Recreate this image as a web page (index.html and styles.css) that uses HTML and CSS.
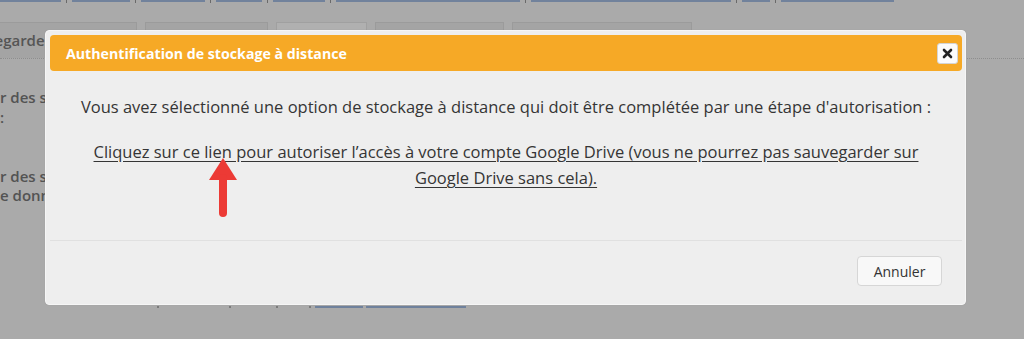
FILE: index.html
```html
<!DOCTYPE html>
<html lang="fr">
<head>
<meta charset="utf-8">
<title>Authentification de stockage à distance</title>
<link rel="stylesheet" href="styles.css">
</head>
<body>
<div class="page">
  <div class="toplinks">
    <span class="ln l1"></span><span class="sep"></span>
    <span class="ln l2"></span><span class="sep"></span>
    <span class="ln l3"></span><span class="sep"></span>
    <span class="ln l4"></span><span class="sep"></span>
    <span class="ln l5"></span><span class="sep"></span>
    <span class="ln l6"></span><span class="sep"></span>
    <span class="ln l7"></span><span class="sep"></span>
    <span class="ln l8"></span><span class="sep"></span>
    <span class="ln l9"></span>
  </div>
  <div class="tabs">
    <div class="tab t1"><span class="tab-label">Sauvegarder / Restaurer</span></div>
    <div class="tab t2"></div>
    <div class="tab t3 active"></div>
    <div class="tab t4"></div>
    <div class="tab t5"></div>
  </div>
  <div class="labels">
    <div class="label-group">
      <div class="label-line">r des sauvegardes distantes</div>
      <div class="label-line">:</div>
    </div>
    <div class="label-group">
      <div class="label-line">r des sauvegardes</div>
      <div class="label-line">e données</div>
    </div>
  </div>
  <div class="bottomrow">
    <span class="dot d1"></span>
    <span class="dot d2"></span>
    <span class="dot d3"></span>
    <span class="dot d4"></span>
    <span class="bl b1"></span>
    <span class="bl b2"></span>
  </div>
</div>

<div class="dialog" role="dialog" aria-labelledby="dlg-title">
  <div class="dialog-header">
    <span id="dlg-title" class="dialog-title">Authentification de stockage à distance</span>
    <button class="close-btn" type="button" aria-label="Fermer">
      <svg width="11" height="11" viewBox="0 0 11 11" aria-hidden="true"><path d="M2 2 L9 9 M9 2 L2 9" stroke="#222" stroke-width="2.6" stroke-linecap="round"/></svg>
    </button>
  </div>
  <div class="dialog-body">
    <p class="intro">Vous avez sélectionné une option de stockage à distance qui doit être complétée par une étape d'autorisation :</p>
    <p class="auth"><a href="#">Cliquez sur ce lien pour autoriser l’accès à votre compte Google Drive (vous ne pourrez pas sauvegarder sur Google Drive sans cela).</a></p>
    <svg class="arrow" width="30" height="60" viewBox="0 0 30 60" aria-hidden="true">
      <path d="M15 1 L1 23 L29 23 Z" fill="#ec3a35"/>
      <path d="M15 21 L15 56" stroke="#ec3a35" stroke-width="8" stroke-linecap="round"/>
    </svg>
  </div>
  <div class="dialog-footer">
    <button class="btn" type="button">Annuler</button>
  </div>
</div>
</body>
</html>
```
FILE: styles.css
```css
html, body {
  margin: 0;
  padding: 0;
}
body {
  background: #aaaaaa;
  width: 1024px;
  height: 339px;
  overflow: hidden;
  font-family: "Open Sans", "DejaVu Sans", sans-serif;
}
.page {
  display: flex;
  flex-direction: column;
}
.toplinks {
  display: flex;
  align-items: flex-start;
  gap: 5px;
  height: 2px;
}
.ln {
  display: block;
  height: 2px;
  background: #71829c;
}
.sep {
  display: block;
  width: 1px;
  height: 3px;
  background: #6a6a6a;
}
.l1 { width: 61px; }
.l2 { width: 58px; }
.l3 { width: 64px; }
.l4 { width: 46px; }
.l5 { width: 52px; }
.l6 { width: 184px; }
.l7 { width: 200px; }
.l8 { width: 28px; }
.l9 { width: 113px; }

.tabs {
  display: flex;
  gap: 8px;
  margin-top: 20px;
  height: 36px;
  border-bottom: 1px dotted #8e8e8e;
}
.tab {
  box-sizing: border-box;
  height: 36px;
  background: #a4a4a4;
  border: 1px solid #9b9b9b;
  border-bottom: none;
  overflow: hidden;
  white-space: nowrap;
}
.t1 { width: 137px; border-left: none; }
.t2 { width: 123px; }
.t3 { width: 91px; background: #b0b0b0; border-color: #a0a0a0; }
.t4 { width: 129px; }
.t5 { width: 180px; }
.tab-label {
  display: block;
  margin-left: -40px;
  padding-top: 7px;
  font-size: 15px;
  font-weight: 600;
  color: #555;
}
.labels {
  display: flex;
  flex-direction: column;
  gap: 40px;
  margin-top: 28px;
  width: 45px;
  overflow: hidden;
}
.label-line {
  white-space: nowrap;
  height: 20px;
  line-height: 20px;
  font-size: 15px;
  font-weight: 600;
  color: #535353;
}
.label-group + .label-group .label-line {
  height: 19px;
  line-height: 19px;
}
.bottomrow {
  position: relative;
  margin-top: 101px;
  height: 3px;
}
.dot {
  position: absolute;
  top: 0;
  width: 2px;
  height: 2px;
  background: #7b7b7b;
}
.d1 { left: 157px; }
.d2 { left: 229px; }
.d3 { left: 276px; }
.d4 { left: 309px; }
.bl {
  position: absolute;
  top: 0;
  height: 2px;
  background: #6f819c;
}
.b1 { left: 315px; width: 48px; }
.b2 { left: 366px; width: 100px; }

/* Dialog overlay */
.dialog {
  position: absolute;
  left: 45px;
  top: 30px;
  width: 921px;
  height: 275px;
  box-sizing: border-box;
  padding: 4px 3px 0 4px;
  background: #eeeeee;
  border: 1px solid #f6f6f6;
  border-radius: 4px;
  box-shadow: 0 0 1px rgba(0,0,0,0.15);
  display: flex;
  flex-direction: column;
}
.dialog-header {
  display: flex;
  align-items: center;
  justify-content: space-between;
  height: 36px;
  padding: 0 4px 0 16px;
  background: #f6a926;
  border-radius: 4px;
}
.dialog-title {
  color: #ffffff;
  font-weight: 700;
  font-size: 14.2px;
}
.close-btn {
  display: flex;
  align-items: center;
  justify-content: center;
  width: 21px;
  height: 21px;
  padding: 0;
  background: #fbfbfb;
  border: 1px solid #d4d4d4;
  border-radius: 3px;
}
.dialog-body {
  position: relative;
  height: 170px;
  padding-top: 23px;
  border-bottom: 1px solid #e0e0e0;
  box-sizing: border-box;
  text-align: center;
  color: #353535;
  font-size: 16.5px;
  line-height: 26px;
}
.dialog-body p {
  margin: 0;
}
.auth {
  margin-top: 19px !important;
  padding: 0 40px;
}
.auth a {
  color: #353535;
  text-decoration: underline;
  text-underline-offset: 3px;
}
.arrow {
  position: absolute;
  left: 158px;
  top: 86px;
}
.dialog-footer {
  display: flex;
  justify-content: flex-end;
  padding: 15px 20px 0 0;
}
.btn {
  width: 85px;
  height: 30px;
  font-family: "Open Sans", "DejaVu Sans", sans-serif;
  font-size: 14px;
  color: #333;
  background: #f8f8f8;
  border: 1px solid #d6d6d6;
  border-radius: 4px;
  padding: 0;
}
```
